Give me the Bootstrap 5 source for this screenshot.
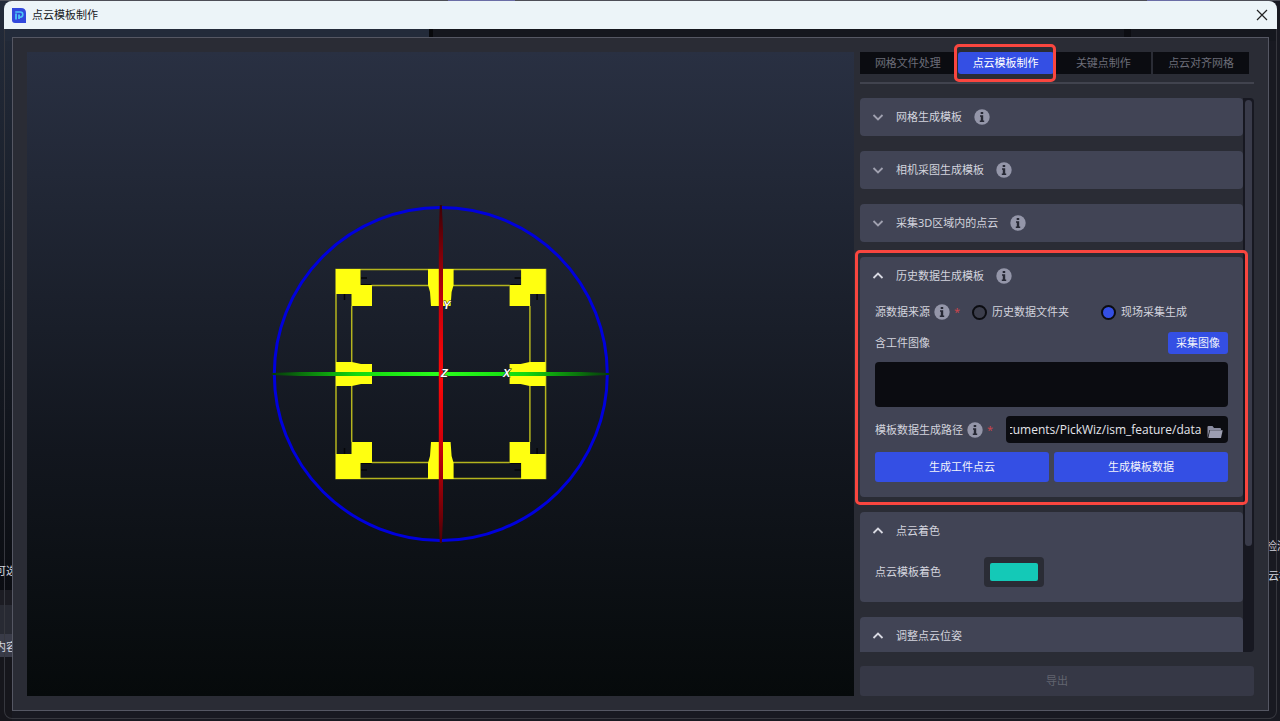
<!DOCTYPE html>
<html lang="zh-CN" data-bs-theme="dark">
<head>
<meta charset="utf-8">
<meta name="viewport" content="width=device-width, initial-scale=1">
<title>点云模板制作</title>
<link href="https://cdn.jsdelivr.net/npm/bootstrap@5.3.0/dist/css/bootstrap.min.css" rel="stylesheet">
<style>
  body { font: 11px/16px "Noto Sans", "Noto Sans CJK SC", sans-serif; color: #d3d4de; background: #181921; }
  .desk { height: 100vh; padding: 1px 3px 2px 4px; background: linear-gradient(90deg, #4d4e57 448px, #6a6da6 448px 515px, #4d4e57 515px 1147px, #6a6da6 1147px 1210px, #4d4e57 1210px) top / 100% 1px no-repeat, linear-gradient(#232b3a, #0b0d12 590px, #1c1c23 590px 605px, #282a33 605px 634px, #393b48 634px 657px, #16161c 657px) left / 12px 100% no-repeat, #181921; }
  .win { border-radius: 8px; background: linear-gradient(90deg, #232b3a 425px, #08090c 425px 429px, #15171e 429px 1120px, #0c0d12 1120px 1127px, #15171e 1127px) top / 100% 40px no-repeat; box-shadow: inset 0 0 0 1px #36373e; }
  .titlebar { height: 28px; padding: 0 8px; background: #ecf4f8; color: #17191d; border-radius: 8px 8px 0 0; }
  .titlebar .caption-text { margin-left: 6px; }
  .titlebar button { width: 14px; height: 14px; color: #222; }
  .panel { margin: 8px; padding: 14px; border: 1px solid #555763; background: #2a2c35; gap: 6px; z-index: 1; }
  .behind { line-height: 16px; white-space: nowrap; }
  .view3d { background: linear-gradient(#293042, #12161e 62%, #060a0b); }
  .side { width: 394px; }
  .tabs { gap: 2px; height: 22px; width: 389px; }
  .tabs .nav-link { padding: 0; line-height: 22px; height: 22px; border-radius: 0; background: #0b0c11; color: #6c6d78; font-size: 11px; }
  .tabs .nav-link.active { background: #344fe4; color: #fff; border-radius: 3px; }
  .marker { border: 3px solid #f9463f; border-radius: 5px; pointer-events: none; z-index: 3; }
  .marker-tab { inset: -8px -2px -8px -4px; }
  .marker-group { inset: -7px -5px -8px -5px; }
  .rule { height: 2px; margin: 8px 0 14px; background: #41434e; }
  .scrollzone { margin: 0 -6px; padding: 0 6px; }
  .groups { gap: 15px; }
  .group { flex: none; background: #414455; border-radius: 4px; padding: 0 15px; }
  .group-head { height: 38px; gap: 12px; color: #d3d4de; line-height: 16px; font-size: 11px; }
  .chev { width: 12px; height: 12px; margin-left: -3px; }
  .track { width: 11px; background: #171821; border-radius: 0 4px 4px 0; padding: 2px; }
  .thumb { height: 81%; background: #393b4a; border-radius: 4px; }
  .b-main { background: #344fe4; color: #f2f3fb; border: 0; border-radius: 3px; font-size: 11px; line-height: 16px; padding: 0; }
  .b-main:hover { background: #4460f0; color: #fff; }
  .star { color: #c8444c; width: 6px; text-align: center; line-height: 16px; }
  .form-row { gap: 4px; }
  .pick { gap: 5px; margin-left: 8px; }
  .pick + .pick { margin-left: 28px; }
  .pick .form-check-input { width: 15px; height: 15px; margin: 0; border: 2px solid #0b0c11; background: #3c3e4c; }
  .pick .form-check-input:checked { background: #344fe4; }
  .shots { height: 45px; resize: none; background: #0b0c11; border: 0; border-radius: 4px; }
  .pathbox { height: 27px; width: 222px; gap: 6px; background: #0b0c11; border-radius: 4px; padding: 0 5px 0 4px; }
  .pathbox input { border: 0; padding: 0; min-width: 0; background: transparent; color: #e4e5ec; font: 12px/20px "Open Sans", sans-serif; outline: 0; }
  .swatch { width: 60px; height: 30px; padding: 6px; border: 0; background: #2a2c35; border-radius: 4px; }
  .swatch::-webkit-color-swatch-wrapper { padding: 0; }
  .swatch::-webkit-color-swatch { border: 0; border-radius: 2px; }
  .export { height: 30px; margin-top: 14px; border: 0; border-radius: 3px; font-size: 11px; padding: 0; }
  .export:disabled { background: #363846; color: #62646f; opacity: 1; }
</style>
</head>
<body class="overflow-hidden">
<svg width="0" height="0" class="position-absolute" aria-hidden="true">
  <symbol id="info" viewBox="0 0 16 16"><circle cx="8" cy="8" r="7.7" fill="#9496a9"/><path d="M6.7 3h2.5v2H6.7zM6 6.3h3.2v5.2h1V13H5.8v-1.500h1V7.700H6z" fill="#272935"/></symbol>
  <symbol id="down" viewBox="0 0 12 12"><path d="M1.500 4 6 8.500 10.500 4" fill="none" stroke="#a0a1b0" stroke-width="1.800"/></symbol>
  <symbol id="up" viewBox="0 0 12 12"><path d="M1.500 8 6 3.500 10.500 8" fill="none" stroke="#d8d9e2" stroke-width="1.800"/></symbol>
</svg>
<div class="desk">
  <div class="win h-100 d-flex flex-column position-relative">
    <header class="titlebar flex-shrink-0 d-flex align-items-center">
      <svg width="14" height="15" viewBox="0 0 14 15" aria-hidden="true"><path d="M0 0h9q5 0 5 5v10H3q-3 0-3-3z" fill="#3248dc"/><path d="M4 5.500V11.500M7 11V6.500" stroke="#4cc4f6" stroke-width="1.800" fill="none"/><path d="M3.200 4h5q2.600 0 2.600 2.500t-2.600 2.700H7" stroke="#4cc4f6" stroke-width="1.600" fill="none"/></svg>
      <span class="caption-text me-auto">点云模板制作</span>
      <button type="button" class="btn p-0 border-0 d-flex" aria-label="关闭"><svg width="14" height="14" viewBox="0 0 14 14"><path d="M2 2l10 10M12 2 2 12" stroke="currentColor" stroke-width="1.200"/></svg></button>
    </header>
    <span class="behind position-absolute" style="left:-9px;top:562px">可选</span>
    <span class="behind position-absolute" style="left:-9px;top:638px">内容</span>
    <span class="behind position-absolute" style="left:1262px;top:537px">检测</span>
    <span class="behind position-absolute" style="left:1264px;top:567px">云模</span>

    <main class="panel flex-fill d-flex position-relative" style="min-height:0">
      <section class="view3d flex-fill" style="min-width:0">
        <svg class="w-100 h-100 d-block" viewBox="27 52 827 644" role="img" aria-label="点云视图">
          <defs>
            <linearGradient id="gx"><stop offset="0" stop-color="#063a0b"/><stop offset=".25" stop-color="#12d80f"/><stop offset=".5" stop-color="#2bff1c"/><stop offset=".75" stop-color="#12d80f"/><stop offset="1" stop-color="#063a0b"/></linearGradient>
            <linearGradient id="ry" x1="0" y1="0" x2="0" y2="1"><stop offset="0" stop-color="#3c0006"/><stop offset=".3" stop-color="#c8000a"/><stop offset=".5" stop-color="#ff0808"/><stop offset=".7" stop-color="#d0000a"/><stop offset="1" stop-color="#4c0006"/></linearGradient>
            <g id="quarter">
              <path d="M336 374V269.500H441M351.700 306V362M372 285.500H429" fill="none" stroke="#b4b41e" stroke-width="1.500"/>
              <path d="M336 269h24.500v16H372v21h-20.500v-12H336zM428 269h11v37h-8l-1-14-2-7zM336 362h16l9 2h11v10h-36z" fill="#ffff10"/>
              <path d="M361 278h6M344.500 294v6" stroke="#050608" stroke-width="1.500"/>
              <path d="M361 284.500h10" stroke="#050608"/>
            </g>
          </defs>
          <circle cx="440.800" cy="374" r="166.500" fill="none" stroke="#0000dc" stroke-width="3"/>
          <use href="#quarter"/>
          <use href="#quarter" transform="translate(881.600 0) scale(-1 1)"/>
          <use href="#quarter" transform="translate(0 748) scale(1 -1)"/>
          <use href="#quarter" transform="translate(881.600 748) scale(-1 -1)"/>
          <path d="M272 373 300 372H581L609 373V375L581 376H300L272 375z" fill="url(#gx)"/>
          <path d="M439.800 205H441.800L443 230V518L441.800 543H439.800L438.800 518V230z" fill="url(#ry)"/>
          <g fill="#fff" stroke="#222" stroke-width="1" paint-order="stroke" font-family="Liberation Sans, sans-serif" font-size="11" font-style="italic" font-weight="bold">
            <text x="443" y="309">Y</text><text x="441" y="377">Z</text><text x="503" y="377">X</text>
          </g>
        </svg>
      </section>

      <aside class="side flex-shrink-0 d-flex flex-column">
        <ul class="tabs nav nav-pills nav-fill flex-nowrap">
          <li class="nav-item w-25"><a class="nav-link" href="#">网格文件处理</a></li>
          <li class="nav-item w-25 position-relative"><a class="nav-link active" href="#" aria-current="page">点云模板制作</a><span class="marker marker-tab position-absolute"></span></li>
          <li class="nav-item w-25"><a class="nav-link" href="#">关键点制作</a></li>
          <li class="nav-item w-25"><a class="nav-link" href="#">点云对齐网格</a></li>
        </ul>
        <div class="rule flex-shrink-0"></div>

        <div class="scrollzone flex-fill d-flex overflow-hidden" style="min-height:0">
          <div class="groups flex-fill d-flex flex-column">
            <section class="group"><div class="group-head d-flex align-items-center"><svg class="chev"><use href="#down"/></svg><span>网格生成模板</span><svg width="16" height="16"><use href="#info"/></svg></div></section>
            <section class="group"><div class="group-head d-flex align-items-center"><svg class="chev"><use href="#down"/></svg><span>相机采图生成模板</span><svg width="16" height="16"><use href="#info"/></svg></div></section>
            <section class="group"><div class="group-head d-flex align-items-center"><svg class="chev"><use href="#down"/></svg><span>采集3D区域内的点云</span><svg width="16" height="16"><use href="#info"/></svg></div></section>

            <section class="group position-relative">
              <span class="marker marker-group position-absolute"></span>
              <div class="group-head d-flex align-items-center"><svg class="chev"><use href="#up"/></svg><span>历史数据生成模板</span><svg width="16" height="16"><use href="#info"/></svg></div>
              <div class="form-row d-flex align-items-center" style="height:34px">
                <span>源数据来源</span><svg width="16" height="16"><use href="#info"/></svg><span class="star">*</span>
                <div class="pick d-flex align-items-center"><input class="form-check-input" type="radio" name="src" id="src1"><label for="src1">历史数据文件夹</label></div>
                <div class="pick d-flex align-items-center"><input class="form-check-input" type="radio" name="src" id="src2" checked><label for="src2">现场采集生成</label></div>
              </div>
              <div class="d-flex align-items-center justify-content-between" style="margin:3px 0 8px">
                <label for="shots">含工件图像</label>
                <button type="button" class="btn b-main" style="width:60px;height:22px">采集图像</button>
              </div>
              <textarea class="shots form-control" id="shots" readonly></textarea>
              <div class="form-row d-flex align-items-center" style="margin:9px 0">
                <label for="path">模板数据生成路径</label><svg width="16" height="16"><use href="#info"/></svg><span class="star">*</span>
                <div class="pathbox d-flex align-items-center ms-auto">
                  <input class="flex-fill" type="text" id="path" value="cuments/PickWiz/ism_feature/data">
                  <svg class="flex-shrink-0 mt-1" width="16" height="16" viewBox="0 0 16 16" aria-hidden="true"><path d="M.5 14V3q0-1 1-1H5.500l1.500 2H13q1 0 1 1v1H2.500z" fill="#8a8ca1"/><path d="M3 6.300H15.700L14 14H1.300z" fill="#9c9eb1"/></svg>
                </div>
              </div>
              <div class="d-flex" style="gap:5px;padding-bottom:15px">
                <button type="button" class="btn b-main flex-fill" style="height:30px">生成工件点云</button>
                <button type="button" class="btn b-main flex-fill" style="height:30px">生成模板数据</button>
              </div>
            </section>

            <section class="group" style="height:90px">
              <div class="group-head d-flex align-items-center"><svg class="chev"><use href="#up"/></svg><span>点云着色</span></div>
              <div class="d-flex align-items-center" style="padding-top:7px">
                <label for="tint" style="width:109px">点云模板着色</label>
                <input type="color" class="swatch" id="tint" value="#14c9b7">
              </div>
            </section>
            <section class="group" style="height:90px"><div class="group-head d-flex align-items-center"><svg class="chev"><use href="#up"/></svg><span>调整点云位姿</span></div></section>
          </div>
          <div class="track flex-shrink-0"><div class="thumb"></div></div>
        </div>
        <button type="button" class="btn export w-100 flex-shrink-0" disabled>导出</button>
      </aside>
    </main>
  </div>
</div>
<script src="https://cdn.jsdelivr.net/npm/bootstrap@5.3.0/dist/js/bootstrap.bundle.min.js"></script>
<script>
  // Keep the end of the path in view
  const path = document.getElementById('path');
  path.scrollLeft = path.scrollWidth;
</script>
</body>
</html>
